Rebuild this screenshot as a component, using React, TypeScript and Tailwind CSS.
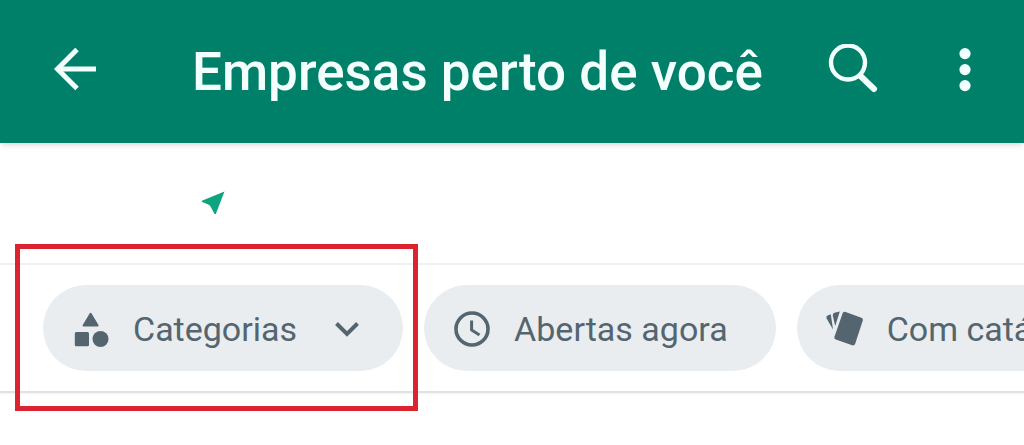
function ArrowIcon() {
  return (
    <svg width="44" height="44" viewBox="0 0 44 44" fill="none" stroke="currentColor" strokeWidth="5">
      <path d="M43 21H5" />
      <path d="M24 1.5L4.5 21L24 40.5" />
    </svg>
  );
}

function SearchIcon() {
  return (
    <svg width="52" height="52" viewBox="0 0 52 52" fill="none" stroke="currentColor">
      <circle cx="21" cy="18.5" r="17" strokeWidth="4.4" />
      <path d="M33.5 32L47 45" strokeWidth="6" strokeLinecap="round" />
    </svg>
  );
}

function MenuIcon() {
  return (
    <svg width="12" height="44" viewBox="0 0 12 44" fill="currentColor">
      <circle cx="6" cy="5.6" r="5.6" />
      <circle cx="6" cy="21.6" r="5.6" />
      <circle cx="6" cy="37.6" r="5.6" />
    </svg>
  );
}

function LocationIcon() {
  return (
    <svg width="24" height="24" viewBox="0 0 24 24" fill="#0fa37f">
      <path d="M23.5 0.5L14.8 23H13.5L9.8 16Q9 14.2 7.2 13.4L0.8 10.8V9.8Z" />
    </svg>
  );
}

function ShapesIcon() {
  return (
    <svg width="36" height="36" viewBox="0 0 36 36" fill="currentColor" className="shrink-0">
      <path d="M17.6 2.8L24.6 14.5H10.6Z" stroke="currentColor" strokeWidth="2" strokeLinejoin="round" />
      <rect x="1.8" y="21" width="14.2" height="14.2" rx="1.5" />
      <circle cx="27.5" cy="28" r="8" />
    </svg>
  );
}

function ClockIcon() {
  return (
    <svg width="36" height="36" viewBox="0 0 36 36" fill="none" stroke="currentColor" className="shrink-0">
      <circle cx="18" cy="18" r="16" strokeWidth="3.6" />
      <path d="M17.6 9.5V19L25.5 24" strokeWidth="3" />
    </svg>
  );
}

function CardsIcon() {
  return (
    <svg width="38" height="36" viewBox="0 0 38 36" fill="currentColor" className="shrink-0">
      <path d="M17.6 2.2Q18.6 0.2 20.6 0.9L36.4 6.8Q38.4 7.7 37.8 9.6L30.2 32.8Q29.3 35 27.2 34.3L10.8 28.6Q8.8 27.8 9.5 25.8Z" />
      <path d="M9.4 1.8L14.8 0.6L10.2 15L7.8 4.4Q7.6 2.4 9.4 1.8Z" />
      <path d="M2.6 4.6L5.8 3.2L8 18.5L1.6 7.4Q0.8 5.4 2.6 4.6Z" />
    </svg>
  );
}

function ChevronIcon() {
  return (
    <svg width="24" height="16" viewBox="0 0 24 16" fill="none" stroke="currentColor" strokeWidth="4" className="shrink-0">
      <path d="M1.5 2.5L12 13L22.5 2.5" />
    </svg>
  );
}

const chip =
  "flex h-[86px] shrink-0 items-center rounded-full bg-[#e9edf0] text-[34px] leading-10 whitespace-nowrap text-[#54656f]";

function App() {
  return (
    <div className="min-h-screen overflow-x-clip bg-white pb-12 font-['Roboto',sans-serif]">
      {/* Header */}
      <header className="flex h-[143px] items-center bg-[#008069] px-[53px] text-[#f3fffd] shadow-md">
        <button type="button" aria-label="Voltar" className="pb-1">
          <ArrowIcon />
        </button>
        <h1 className="ml-[95px] grow text-[53px] leading-[60px] font-medium whitespace-nowrap">
          Empresas perto de você
        </h1>
        <button type="button" aria-label="Pesquisar" className="mr-20 pb-1">
          <SearchIcon />
        </button>
        <button type="button" aria-label="Mais opções" className="pb-1">
          <MenuIcon />
        </button>
      </header>

      {/* Location */}
      <div className="flex h-[120px] items-center pl-[201px]">
        <LocationIcon />
      </div>

      {/* Filters */}
      <div className="flex gap-[21px] border-t-2 border-b-2 border-t-[#f0f0f0] border-b-[#e2e2e2] py-5 pl-[43px] shadow-xs">
        <div className="relative shrink-0">
          <button type="button" className={`${chip} pt-0.5 pr-11 pl-[30px]`}>
            <ShapesIcon />
            <span className="ml-6">Categorias</span>
            <span className="ml-[38px]">
              <ChevronIcon />
            </span>
          </button>
          {/* Highlight */}
          <div className="pointer-events-none absolute -top-[41px] -right-[15px] -bottom-10 -left-7 border-[5px] border-[#db2430]" />
        </div>
        <button type="button" className={`${chip} pt-0.5 pr-12 pl-[30px]`}>
          <ClockIcon />
          <span className="ml-6">Abertas agora</span>
        </button>
        <button type="button" className={`${chip} pt-0.5 pr-12 pl-7`}>
          <CardsIcon />
          <span className="ml-6">Com catálogo</span>
        </button>
      </div>
    </div>
  );
}

export default App;
